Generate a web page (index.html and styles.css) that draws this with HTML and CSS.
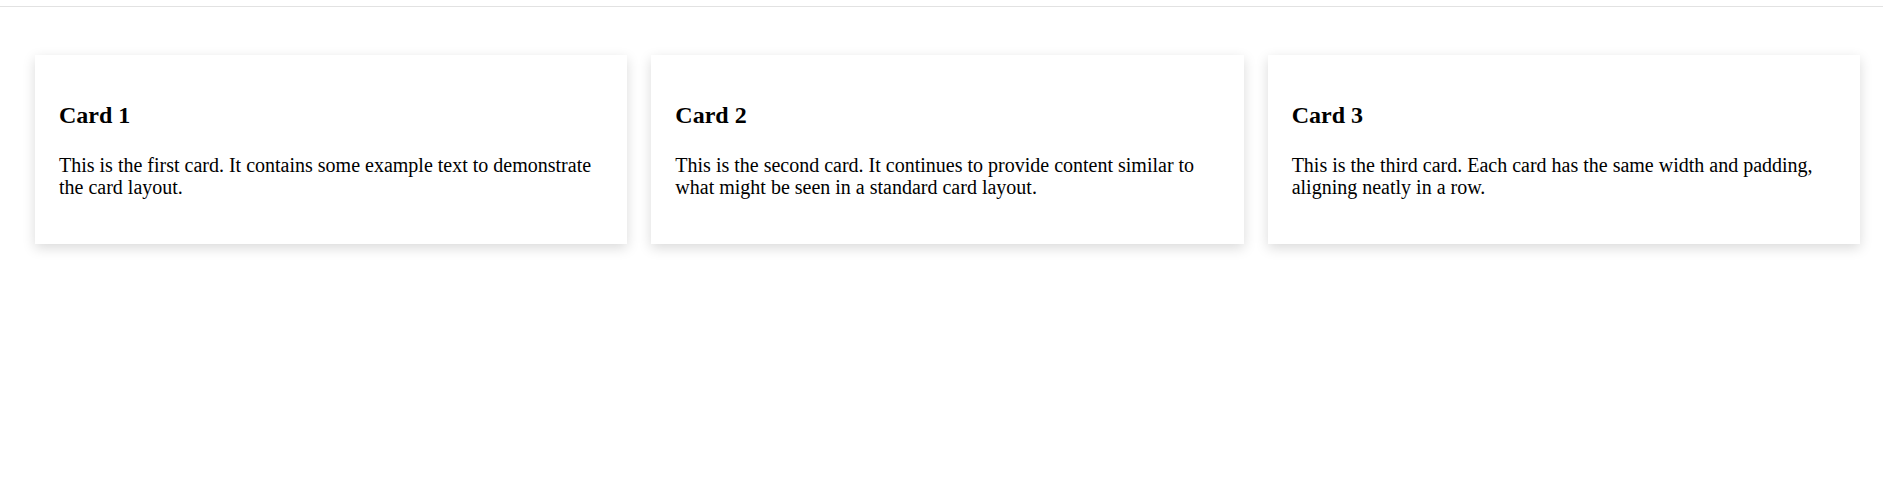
FILE: index.html
```html
<!DOCTYPE html>
<html lang="en">
<head>
<meta charset="utf-8">
<title>Cards</title>
<link rel="stylesheet" href="styles.css">
</head>
<body>
<div class="topbar"></div>
<main class="cards">
  <section class="card">
    <h2 class="card-title">Card 1</h2>
    <p class="card-text">This is the first card. It contains some example text to demonstrate the card layout.</p>
  </section>
  <section class="card">
    <h2 class="card-title">Card 2</h2>
    <p class="card-text">This is the second card. It continues to provide content similar to what might be seen in a standard card layout.</p>
  </section>
  <section class="card">
    <h2 class="card-title">Card 3</h2>
    <p class="card-text">This is the third card. Each card has the same width and padding, aligning neatly in a row.</p>
  </section>
</main>
</body>
</html>
```
FILE: styles.css
```css
html, body {
  margin: 0;
  padding: 0;
  background: #ffffff;
}

body {
  min-height: 501px;
  font-family: "Liberation Serif", "Times New Roman", serif;
  color: #000000;
}

.topbar {
  height: 6px;
  border-bottom: 1px solid #e2e2e2;
}

.cards {
  display: flex;
  gap: 24px;
  padding: 48px 23px 40px 35px;
  align-items: flex-start;
}

.card {
  flex: 1 1 0;
  min-width: 0;
  background: #ffffff;
  padding: 24px;
  box-shadow: 0 4px 12px rgba(0, 0, 0, 0.15);
}

.card-title {
  font-size: 24px;
  font-weight: bold;
  margin: 23px 0 25px;
}

.card-text {
  font-size: 20px;
  line-height: 22px;
  margin: 0 0 22px;
}
```
